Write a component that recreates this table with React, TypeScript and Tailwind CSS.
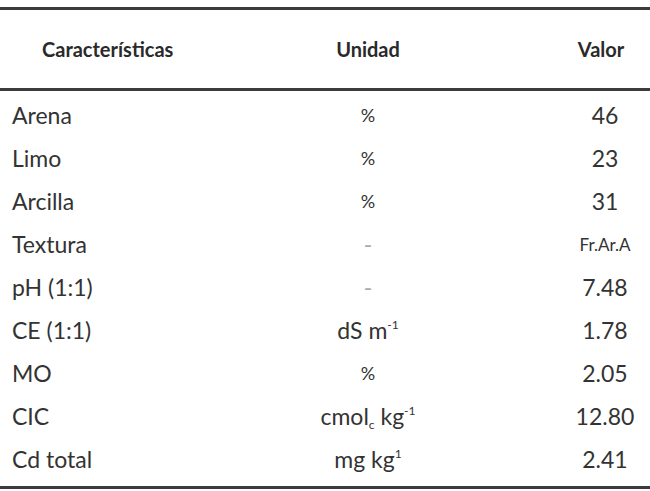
import React from 'react';

const rows: { name: string; unit: React.ReactNode; value: string; small?: boolean; dash?: boolean }[] = [
  { name: 'Arena', unit: '%', value: '46' },
  { name: 'Limo', unit: '%', value: '23' },
  { name: 'Arcilla', unit: '%', value: '31' },
  { name: 'Textura', unit: '-', value: 'Fr.Ar.A', small: true, dash: true },
  { name: 'pH (1:1)', unit: '-', value: '7.48', dash: true },
  {
    name: 'CE (1:1)',
    unit: (
      <span>
        dS m<sup className="text-[12px] relative -top-[10px]">-1</sup>
      </span>
    ),
    value: '1.78',
  },
  { name: 'MO', unit: '%', value: '2.05' },
  {
    name: 'CIC',
    unit: (
      <span>
        cmol<sub className="text-[12px] relative top-[4px]">c</sub> kg<sup className="text-[12px] relative -top-[10px]">-1</sup>
      </span>
    ),
    value: '12.80',
  },
  {
    name: 'Cd total',
    unit: (
      <span>
        mg kg<sup className="text-[12px] relative -top-[10px]">1</sup>
      </span>
    ),
    value: '2.41',
  },
];

export default function App() {
  return (
    <div className="w-[650px] h-[491px] bg-white pt-[7px] text-[#333] font-['Lato','Noto_Sans',sans-serif]">
      <div className="border-t-[3px] border-b-[3px] border-[#3c3c3c]">
        {/* header */}
        <div className="flex items-center h-[78px] text-[20px] font-bold text-[#2a2a2a]">
          <div className="w-[264px] pl-[42px]">Características</div>
          <div className="w-[208px] text-center">Unidad</div>
          <div className="ml-auto w-[90px] text-center pr-[8px]">Valor</div>
        </div>
      </div>
      <div className="pt-[3px] pb-[5px] border-b-[3px] border-[#3c3c3c]">
        {rows.map((r, i) => (
          <div key={i} className="flex items-center h-[43px] text-[23px]">
            <div className="w-[264px] pl-[12px]">{r.name}</div>
            <div className={`w-[208px] text-center ${r.dash ? 'text-[#aaa]' : ''} ${r.unit === '%' ? 'text-[18px]' : ''}`}>
              {r.unit}
            </div>
            <div className={`ml-auto w-[90px] text-center ${r.small ? 'text-[17px]' : ''}`}>{r.value}</div>
          </div>
        ))}
      </div>
    </div>
  );
}
